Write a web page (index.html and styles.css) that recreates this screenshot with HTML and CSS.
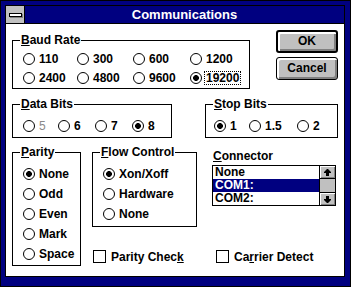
FILE: index.html
```html
<!DOCTYPE html>
<html lang="en">
<head>
    <meta charset="UTF-8">
    <meta name="viewport" content="width=device-width, initial-scale=1.0">
    <title>Communications</title>
    <link rel="stylesheet" href="styles.css">
</head>
<body>
    <div class="window">
        <div class="inner">
            <div class="titlebar">
                <div class="sysmenu"><span class="sysbar"></span></div>
                <div class="title">Communications</div>
            </div>
            <div class="client">
                <div class="row-top">
                    <div class="group baud">
                        <div class="group-title"><u>B</u>aud Rate</div>
                        <div class="baud-grid">
                            <span class="radio"><i class="dot"></i><span class="txt">110</span></span>
                            <span class="radio"><i class="dot"></i><span class="txt">300</span></span>
                            <span class="radio"><i class="dot"></i><span class="txt">600</span></span>
                            <span class="radio"><i class="dot"></i><span class="txt">1200</span></span>
                            <span class="radio"><i class="dot"></i><span class="txt">2400</span></span>
                            <span class="radio"><i class="dot"></i><span class="txt">4800</span></span>
                            <span class="radio"><i class="dot"></i><span class="txt">9600</span></span>
                            <span class="radio on"><i class="dot"></i><span class="txt focus">19200</span></span>
                        </div>
                    </div>
                    <div class="buttons">
                        <div class="btn btn-default">OK</div>
                        <div class="btn">Cancel</div>
                    </div>
                </div>

                <div class="row-mid">
                    <div class="group databits">
                        <div class="group-title"><u>D</u>ata Bits</div>
                        <div class="data-grid">
                            <span class="radio"><i class="dot"></i><span class="txt disabled">5</span></span>
                            <span class="radio"><i class="dot"></i><span class="txt">6</span></span>
                            <span class="radio"><i class="dot"></i><span class="txt">7</span></span>
                            <span class="radio on"><i class="dot"></i><span class="txt">8</span></span>
                        </div>
                    </div>
                    <div class="group stopbits">
                        <div class="group-title"><u>S</u>top Bits</div>
                        <div class="stop-grid">
                            <span class="radio on"><i class="dot"></i><span class="txt">1</span></span>
                            <span class="radio"><i class="dot"></i><span class="txt">1.5</span></span>
                            <span class="radio"><i class="dot"></i><span class="txt">2</span></span>
                        </div>
                    </div>
                </div>

                <div class="row-low">
                    <div class="group parity">
                        <div class="group-title"><u>P</u>arity</div>
                        <div class="radio-list">
                            <span class="radio on"><i class="dot"></i><span class="txt">None</span></span>
                            <span class="radio"><i class="dot"></i><span class="txt">Odd</span></span>
                            <span class="radio"><i class="dot"></i><span class="txt">Even</span></span>
                            <span class="radio"><i class="dot"></i><span class="txt">Mark</span></span>
                            <span class="radio"><i class="dot"></i><span class="txt">Space</span></span>
                        </div>
                    </div>
                    <div class="low-right">
                        <div class="low-top">
                            <div class="group flow">
                                <div class="group-title"><u>F</u>low Control</div>
                                <div class="radio-list">
                                    <span class="radio on"><i class="dot"></i><span class="txt">Xon/Xoff</span></span>
                                    <span class="radio"><i class="dot"></i><span class="txt">Hardware</span></span>
                                    <span class="radio"><i class="dot"></i><span class="txt">None</span></span>
                                </div>
                            </div>
                            <div class="connector">
                                <div class="conn-label"><u>C</u>onnector</div>
                                <div class="listbox">
                                    <div class="list-items">
                                        <div class="item">None</div>
                                        <div class="item sel">COM1:</div>
                                        <div class="item">COM2:</div>
                                    </div>
                                    <div class="vscroll">
                                        <div class="sb-btn sb-up">
                                            <svg width="7" height="7" viewBox="0 0 7 7"><polygon points="3,0 4,0 7,3 7,4 5,4 5,7 2,7 2,4 0,4 0,3" fill="#000"/></svg>
                                        </div>
                                        <div class="sb-thumb"></div>
                                        <div class="sb-btn sb-down">
                                            <svg width="7" height="7" viewBox="0 0 7 7"><polygon points="2,0 5,0 5,3 7,3 7,4 4,7 3,7 0,4 0,3 2,3" fill="#000"/></svg>
                                        </div>
                                    </div>
                                </div>
                            </div>
                        </div>
                        <div class="low-checks">
                            <span class="check check-parity"><i class="box"></i>Parity Chec<u>k</u></span>
                            <span class="check"><i class="box"></i>Ca<u>r</u>rier Detect</span>
                        </div>
                    </div>
                </div>
            </div>
        </div>
    </div>
</body>
</html>
```

FILE: styles.css
```css
*{
    margin: 0;
    padding: 0;
    box-sizing: border-box;
}
body{
    width: 351px;
    height: 287px;
    overflow: hidden;
    background-color: #000080;
    font-family: "Liberation Sans", Arial, sans-serif;
    font-weight: bold;
    font-size: 12px;
    color: #000;
}
.window{
    width: 351px;
    height: 287px;
    border: 1px solid #000;
    background-color: #000080;
    padding: 4px 5px 9px 4px;
}
.inner{
    height: 100%;
    border: 1px solid #000;
    background-color: #fff;
}

/* title bar */
.titlebar{
    display: flex;
    height: 18px;
    background-color: #000080;
    border-bottom: 1px solid #000;
}
.sysmenu{
    width: 19px;
    background-color: #c0c0c0;
    border-right: 1px solid #000;
    display: flex;
    align-items: center;
    justify-content: center;
}
.sysbar{
    width: 13px;
    height: 4px;
    background-color: #fff;
    border: 1px solid #000;
    box-shadow: 1px 1px 0 #808080;
}
.title{
    flex: 1;
    text-align: center;
    color: #fff;
    font-size: 13px;
    line-height: 17px;
}

/* dialog body */
.client{
    padding: 6px 6px 0 6px;
}
.row-top{
    display: flex;
    align-items: flex-start;
}
.row-mid{
    display: flex;
    margin-top: 15px;
}
.row-low{
    display: flex;
    margin-top: 14px;
}

/* group boxes */
.group{
    border: 1px solid #000;
}
.group-title{
    display: table;
    margin: -8px 0 0 7px;
    padding: 0 1px;
    background-color: #fff;
    line-height: 15px;
}
.baud{
    width: 238px;
    height: 49px;
    margin-top: 10px;
}
.baud-grid{
    display: grid;
    grid-template-columns: 54px 56px 57px auto;
    grid-auto-rows: 19px;
    padding-left: 10px;
    margin-top: 1px;
}
.databits{
    width: 160px;
    height: 34px;
}
.data-grid{
    display: grid;
    grid-template-columns: 35px 37px 37px auto;
    height: 19px;
    padding-left: 10px;
    margin-top: 4px;
}
.stopbits{
    width: 133px;
    height: 34px;
    margin-left: auto;
}
.stop-grid{
    display: grid;
    grid-template-columns: 35px 48px auto;
    height: 19px;
    padding-left: 8px;
    margin-top: 4px;
}
.parity{
    width: 69px;
    height: 114px;
}
.flow{
    width: 105px;
    height: 75px;
}
.radio-list{
    display: flex;
    flex-direction: column;
    padding-left: 10px;
    margin-top: 4px;
}
.radio-list .radio{
    height: 20px;
}

/* radio buttons */
.radio{
    display: flex;
    align-items: center;
    height: 19px;
}
.dot{
    flex: none;
    width: 12px;
    height: 12px;
    border: 1px solid #000;
    border-radius: 50%;
}
.radio.on .dot{
    background: radial-gradient(circle, #000 0 2.6px, #fff 3.2px);
}
.txt{
    margin-left: 2px;
    padding: 0 1px;
    border: 1px solid transparent;
    line-height: 12px;
}
.txt.focus{
    border: 1px dotted #000;
}
.txt.disabled{
    color: #8a8a8a;
    font-weight: normal;
}

/* push buttons */
.buttons{
    margin-left: auto;
    width: 62px;
    display: flex;
    flex-direction: column;
    gap: 4px;
}
.btn{
    height: 23px;
    border: 1px solid #000;
    border-radius: 3px;
    background-color: #c0c0c0;
    box-shadow: inset 2px 2px 0 #fff, inset -2px -2px 0 #808080;
    text-align: center;
    line-height: 21px;
}
.btn-default{
    border-width: 2px;
    line-height: 19px;
}

/* lower right part */
.low-right{
    margin-left: 11px;
    flex: 1;
    display: flex;
    flex-direction: column;
}
.low-top{
    display: flex;
    align-items: flex-start;
}
.connector{
    margin-left: 15px;
    margin-top: -2px;
    width: 124px;
}
.conn-label{
    line-height: 13px;
    padding-left: 1px;
    margin-bottom: 2px;
}
.listbox{
    display: flex;
    height: 41px;
    border: 1px solid #000;
}
.list-items{
    flex: 1;
}
.item{
    height: 13px;
    line-height: 13px;
    padding-left: 2px;
}
.item.sel{
    background-color: #000080;
    color: #fff;
}
.vscroll{
    width: 16px;
    border-left: 1px solid #000;
    display: flex;
    flex-direction: column;
}
.sb-btn{
    height: 13px;
    background-color: #c0c0c0;
    box-shadow: inset 1px 1px 0 #fff, inset -1px -1px 0 #808080;
    display: flex;
    align-items: center;
    justify-content: center;
}
.sb-btn svg{
    display: block;
}
.sb-up{
    border-bottom: 1px solid #000;
}
.sb-down{
    border-top: 1px solid #000;
}
.sb-thumb{
    flex: 1;
    background-color: #c0c0c0;
}

/* check boxes */
.low-checks{
    display: flex;
    align-items: center;
    height: 13px;
    margin-top: 23px;
}
.check{
    display: flex;
    align-items: center;
}
.check-parity{
    width: 123px;
    margin-left: 1px;
}
.box{
    flex: none;
    width: 13px;
    height: 13px;
    border: 1px solid #000;
    margin-right: 5px;
}
```
